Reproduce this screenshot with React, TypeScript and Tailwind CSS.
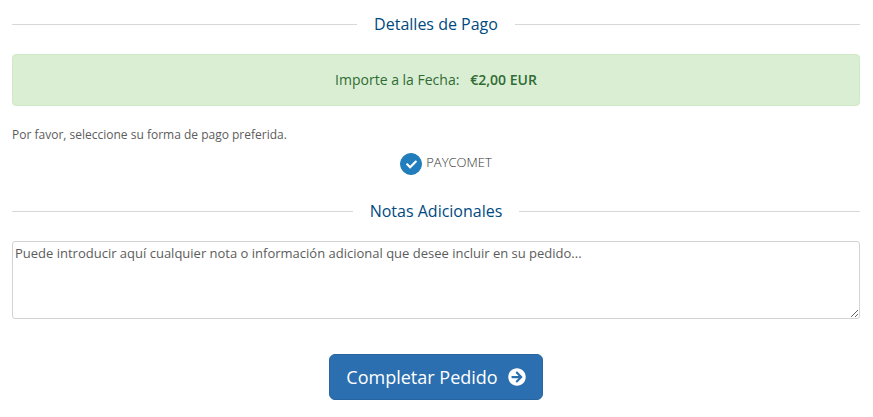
import { FaArrowCircleRight, FaCheck } from "react-icons/fa";

function SectionHeading({ children }: { children: string }) {
  return (
    <h2 className="flex items-center gap-[17px] text-base leading-6 text-[#004a80]">
      <span className="h-px flex-1 bg-[#d8d8d8]" />
      {children}
      <span className="h-px flex-1 bg-[#d8d8d8]" />
    </h2>
  );
}

export default function App() {
  return (
    <form
      className="bg-white pt-3 pr-[13px] pb-4 pl-3 font-['Open_Sans','Noto_Sans',sans-serif] text-[#5c5c5c]"
      onSubmit={(event) => event.preventDefault()}
    >
      <SectionHeading>Detalles de Pago</SectionHeading>

      <div className="mt-[18px] rounded border border-[#d0e9c6] bg-[#daeed3] p-[15px] text-center text-sm text-[#2f6b33]">
        Importe a la Fecha: &nbsp; <strong className="font-semibold">€2,00 EUR</strong>
      </div>

      <fieldset className="mt-5">
        <legend className="text-xs leading-[18px]">
          Por favor, seleccione su forma de pago preferida.
        </legend>
        <div className="mt-2 flex justify-center">
          <label className="flex items-start gap-1 pl-5 text-[13px] leading-5 font-light text-[#333]">
            <span className="grid place-items-center pt-px">
              <input
                type="radio"
                name="payment-method"
                value="paycomet"
                defaultChecked
                className="peer col-start-1 row-start-1 size-[22px] appearance-none rounded-full border border-[#217dbb] checked:bg-[#217dbb]"
              />
              <FaCheck
                aria-hidden="true"
                className="pointer-events-none invisible col-start-1 row-start-1 size-[11px] text-white peer-checked:visible"
              />
            </span>
            PAYCOMET
          </label>
        </div>
      </fieldset>

      <div className="mt-6">
        <SectionHeading>Notas Adicionales</SectionHeading>
      </div>

      <textarea
        aria-label="Notas Adicionales"
        placeholder="Puede introducir aquí cualquier nota o información adicional que desee incluir en su pedido..."
        className="mt-[18px] block h-[78px] w-full resize rounded-[3px] border border-[#d3d3d3] px-0.5 py-[2px] text-[13px] leading-[18px] placeholder:text-[#5c5c5c]"
      />

      <div className="mt-[35px] text-center">
        <button
          type="submit"
          className="inline-flex items-center gap-2.5 rounded-md border border-[#2764a0] bg-[#2b6fb0] px-4 py-2.5 text-lg leading-6 text-white"
        >
          Completar Pedido
          <FaArrowCircleRight aria-hidden="true" className="size-[18px]" />
        </button>
      </div>
    </form>
  );
}
